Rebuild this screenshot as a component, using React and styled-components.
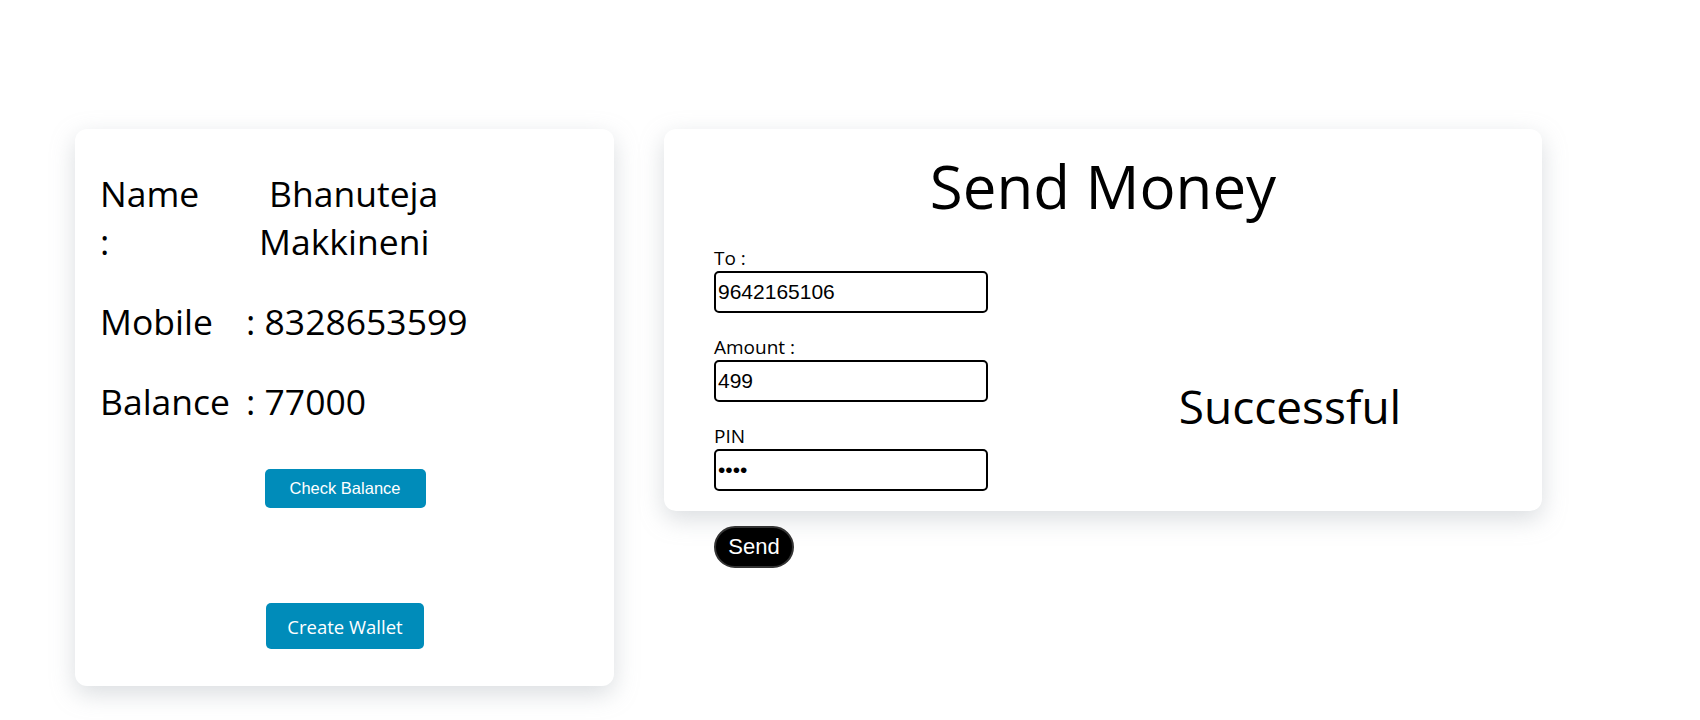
import React from "react";
import styled, { createGlobalStyle } from "styled-components";

const GlobalStyle = createGlobalStyle`
  html, body {
    margin: 0;
    padding: 0;
    background: #ffffff;
    font-family: "Open Sans", "Noto Sans", sans-serif;
    color: #000000;
  }
  * { box-sizing: border-box; }
`;

const Page = styled.main`
  display: flex;
  align-items: flex-start;
  gap: 50px;
  padding: 129px 0 0 75px;
  min-height: 720px;
`;

const Card = styled.section`
  background: #ffffff;
  border-radius: 12px;
  box-shadow: rgba(149, 157, 165, 0.35) 0px 8px 24px;
`;

const ProfileCard = styled(Card)`
  width: 539px;
  height: 557px;
  padding: 40px 24px 37px 25px;
  display: flex;
  flex-direction: column;
`;

const InfoList = styled.div`
  display: flex;
  flex-direction: column;
  gap: 32px;
`;

const InfoRow = styled.div`
  display: grid;
  grid-template-columns: ${(p) => p.$cols};
  align-items: start;
  font-size: 35.5px;
  line-height: 48px;
`;

const InfoLabel = styled.div`
  max-width: ${(p) => p.$max || "none"};
  white-space: ${(p) => (p.$max ? "normal" : "nowrap")};
`;

const InfoValue = styled.div`
  text-indent: ${(p) => p.$indent || "0"};
  white-space: ${(p) => (p.$wrap ? "normal" : "nowrap")};
`;

const Actions = styled.div`
  display: flex;
  flex-direction: column;
  align-items: center;
`;

const WalletButton = styled.button`
  display: flex;
  align-items: center;
  justify-content: center;
  width: ${(p) => p.$w};
  height: ${(p) => p.$h};
  margin-top: ${(p) => p.$top};
  padding: 0;
  border: none;
  border-radius: 5px;
  background: #008cba;
  color: #ffffff;
  font-family: ${(p) =>
    p.$sans ? '"Open Sans", sans-serif' : '"Liberation Sans", Arial, sans-serif'};
  font-size: ${(p) => p.$font};
  cursor: pointer;
`;

const SendColumn = styled.div`
  display: flex;
  flex-direction: column;
  align-items: flex-start;
`;

const TransferCard = styled(Card)`
  width: 878px;
  height: 382px;
  padding: 21px 50px 0 50px;
`;

const Title = styled.h1`
  margin: 0;
  text-align: center;
  font-weight: 400;
  font-size: 60px;
  line-height: 72px;
`;

const TransferBody = styled.div`
  display: grid;
  grid-template-columns: 374px 1fr;
  margin-top: 23px;
`;

const Form = styled.form`
  display: flex;
  flex-direction: column;
  gap: 21px;
`;

const Field = styled.div`
  display: flex;
  flex-direction: column;
`;

const FieldLabel = styled.label`
  font-size: 19px;
  line-height: 26px;
`;

const FieldInput = styled.input`
  width: 274px;
  height: 42px;
  padding: 1px 2px;
  border: 2px solid #000000;
  border-radius: 5px;
  font-family: "Liberation Sans", Arial, sans-serif;
  font-size: 21px;
  color: #000000;
  background: #ffffff;
  outline: none;
`;

const Message = styled.div`
  padding-top: 130px;
  text-align: center;
  font-size: 46px;
  line-height: 62px;
`;

const SendButton = styled.button`
  margin: 15px 0 0 50px;
  width: 80px;
  height: 42px;
  padding: 0;
  border: 2px solid #333333;
  border-radius: 21px;
  background: #000000;
  color: #ffffff;
  font-family: "Liberation Sans", Arial, sans-serif;
  font-size: 22px;
  cursor: pointer;
`;

export default function App() {
  return (
    <>
      <GlobalStyle />
      <Page>
        <ProfileCard>
          <InfoList>
            <InfoRow $cols="159px 200px">
              <InfoLabel $max="106px">Name :</InfoLabel>
              <InfoValue $indent="10px" $wrap>
                Bhanuteja Makkineni
              </InfoValue>
            </InfoRow>
            <InfoRow $cols="146px auto">
              <InfoLabel>Mobile</InfoLabel>
              <InfoValue>: 8328653599</InfoValue>
            </InfoRow>
            <InfoRow $cols="146px auto">
              <InfoLabel>Balance</InfoLabel>
              <InfoValue>: 77000</InfoValue>
            </InfoRow>
          </InfoList>
          <Actions>
            <WalletButton $w="161px" $h="39px" $top="44px" $font="16.5px">
              Check Balance
            </WalletButton>
            <WalletButton $w="158px" $h="46px" $top="95px" $font="18.5px" $sans>
              Create Wallet
            </WalletButton>
          </Actions>
        </ProfileCard>

        <SendColumn>
          <TransferCard>
            <Title>Send Money</Title>
            <TransferBody>
              <Form onSubmit={(e) => e.preventDefault()}>
                <Field>
                  <FieldLabel htmlFor="to">To :</FieldLabel>
                  <FieldInput id="to" type="text" defaultValue="9642165106" />
                </Field>
                <Field>
                  <FieldLabel htmlFor="amount">Amount :</FieldLabel>
                  <FieldInput id="amount" type="text" defaultValue="499" />
                </Field>
                <Field>
                  <FieldLabel htmlFor="pin">PIN</FieldLabel>
                  <FieldInput id="pin" type="password" defaultValue="1234" />
                </Field>
              </Form>
              <Message>Successful</Message>
            </TransferBody>
          </TransferCard>
          <SendButton type="button">Send</SendButton>
        </SendColumn>
      </Page>
    </>
  );
}
